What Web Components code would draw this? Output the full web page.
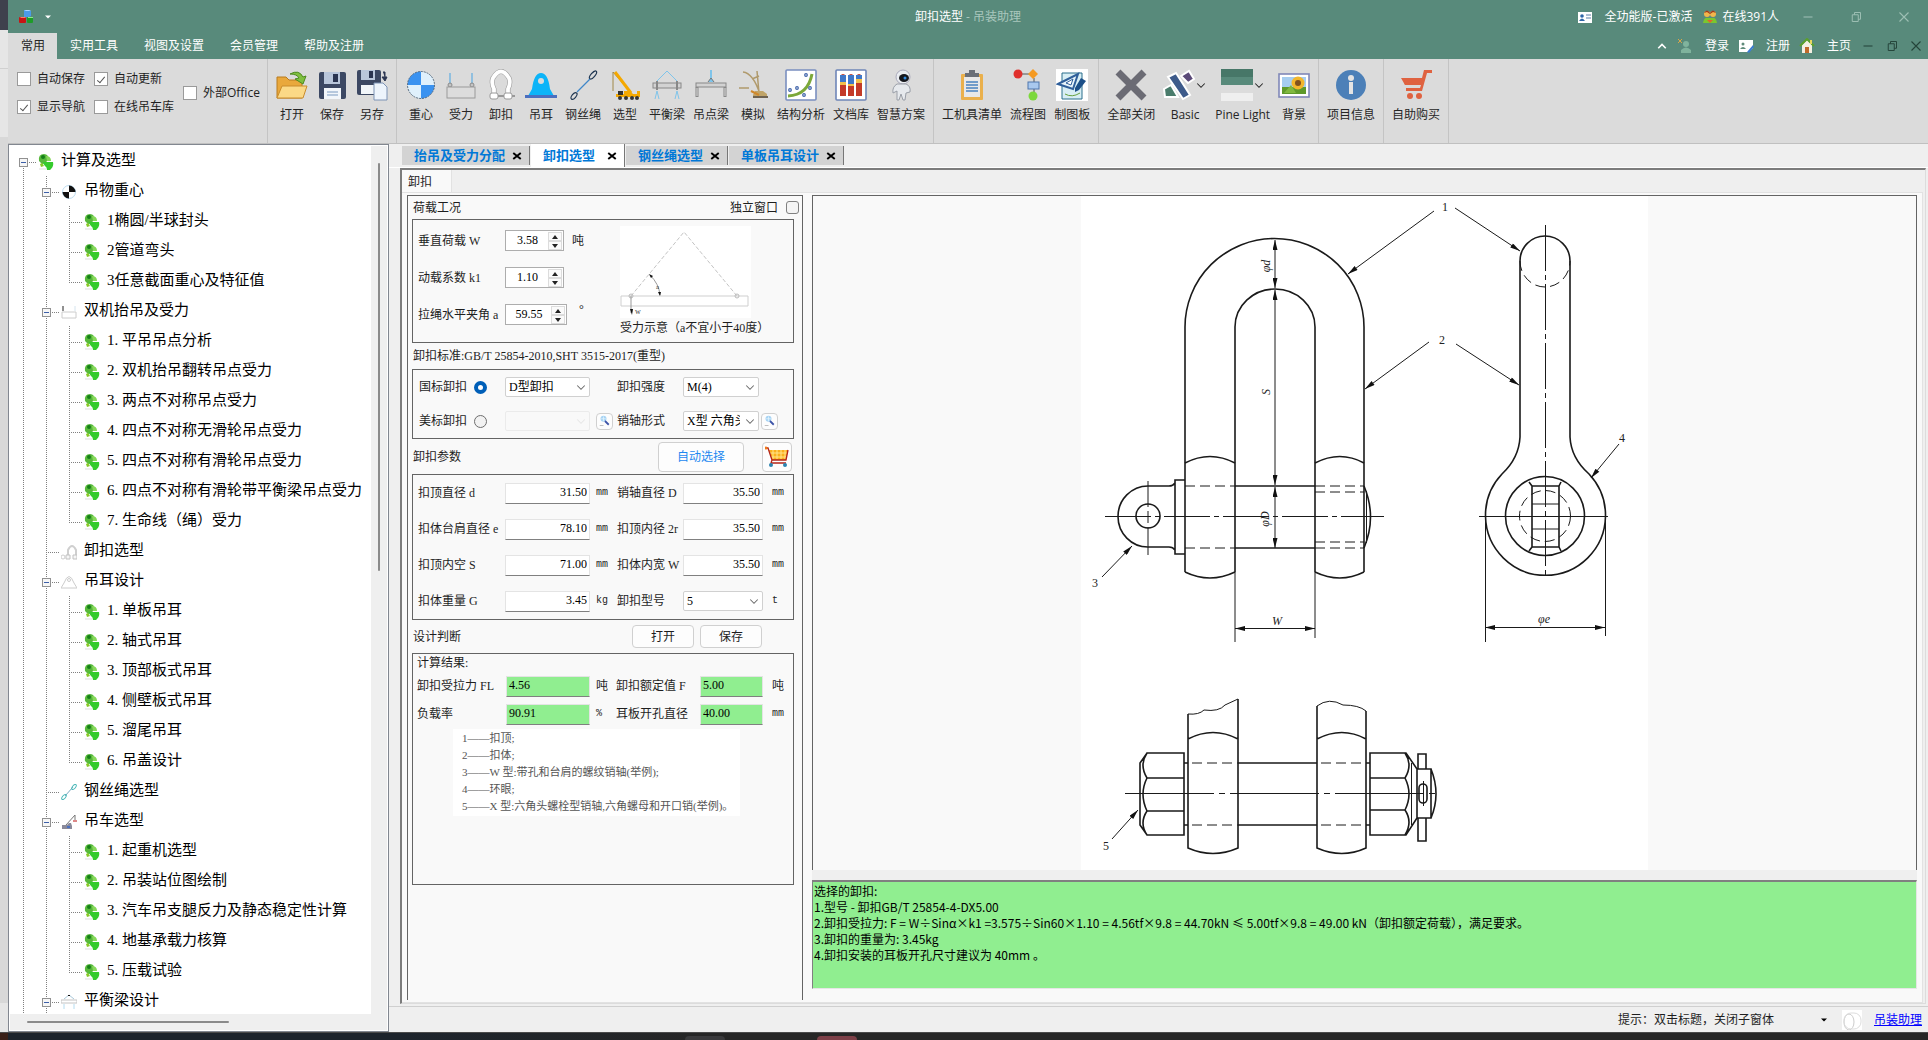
<!DOCTYPE html>
<html lang="zh-CN">
<head>
<meta charset="utf-8">
<title>卸扣选型 - 吊装助理</title>
<style>
  :root {
    --green: #588a7b;
    --ribbon: #dbdbdb;
    --chrome: #efefef;
    --page: #f9f9f9;
    --line: #646464;
    --ok: #90ee90;
    --ui-font: "Open Sans", "Noto Sans CJK SC", sans-serif;
    --form-font: "Liberation Serif", "Noto Sans CJK SC", serif;
    --log-font: "Noto Sans CJK SC", sans-serif;
  }
  body {
    margin: 0;
    font: 12px/16px var(--ui-font);
    color: #1e1e1e;
  }
</style>
</head>
<body>
<app-window></app-window>

<script>
const ICONS = {
  cubes: `<path d="M6 1h5l2 1v5l-2 1H6z" fill="#4a9be8"/><path d="M6 1h5l2 1H8z" fill="#a8d4ff"/><rect x="1" y="8" width="7" height="6" rx="1" fill="#c81414"/><path d="M2 8h5l1 1H3z" fill="#ff7a6a"/><rect x="9" y="8" width="6" height="6" rx="1" fill="#1d9c28"/><path d="M10 8h5v1h-5z" fill="#8be88a"/>`,
  drop: `<path d="M4 6h8l-4 4z" fill="currentColor"/>`,
  chevron: `<path d="M3 6l5 5 5-5" fill="none" stroke="currentColor" stroke-width="1.4"/>`,
  caretup: `<path d="M3 11l5-5 5 5" fill="none" stroke="currentColor" stroke-width="2.2"/>`,
  min: `<path d="M2 8h12" stroke="currentColor" stroke-width="1.4"/>`,
  restore: `<path d="M3 5h8v9H3zM6 5V2h8v9h-3" fill="none" stroke="currentColor" stroke-width="1.3"/>`,
  close: `<path d="M2 2l12 12M14 2L2 14" stroke="currentColor" stroke-width="1.5"/>`,
  cross: `<path d="M3 4l10 8M13 4L3 12" stroke="currentColor" stroke-width="2.6"/>`,
  card: `<rect x="1" y="3" width="14" height="11" fill="#fff"/><circle cx="5" cy="7" r="1.800" fill="#2f66a8"/><path d="M2 12q3-5 6 0z" fill="#2f66a8"/><path d="M9 6h5M9 9h5" stroke="#5a7fa8"/>`,
  people: `<circle cx="5" cy="5" r="3" fill="#f2b64c"/><circle cx="11" cy="5" r="3" fill="#f2b64c"/><path d="M2 4q3-5 6 0q3-5 6 0l-3-1-3 2-3-2z" fill="#a03a1e"/><path d="M1 14q1-6 5-5h4q4-1 5 5z" fill="#7cc62e"/><path d="M5 11l3 3 3-3z" fill="#e2642c"/>`,
  user: `<circle cx="9" cy="6" r="3" fill="#7fb39d"/><path d="M4 15v-3q5-5 10 0v3z" fill="#7fb39d"/><path d="M1 1l4 4M5 1L1 5" stroke="#d7a64a"/>`,
  register: `<path d="M1 2h14v8l-4 4H1z" fill="#fff"/><circle cx="5" cy="6" r="1.500" fill="#5f8b7b"/><path d="M2 11q3-4 6 0z" fill="#5f8b7b"/><path d="M9 14l6-7 1 2-5 6z" fill="#3a7bd0"/>`,
  home: `<path d="M3 7l5-5 5 5v8H3z" fill="#f4efe2"/><path d="M1 8l7-7 7 7" fill="none" stroke="#5aa02c" stroke-width="2"/><rect x="6" y="9" width="4" height="6" fill="#c06a2a"/><rect x="11" y="2" width="2" height="4" fill="#e8d860"/>`,
  open: `<path d="M1 8h9l3 3h13v18H1z" fill="#e9a83c" stroke="#b87a1e"/><path d="M1 29l5-12h25l-4 12z" fill="#fbd986" stroke="#c98c2c"/><path d="M14 5q9-5 13 3l3-1-3 8-8-5 4-1q-2-4-9-4z" fill="#7fbf3f" stroke="#4d8a1e"/>`,
  save: `<rect x="3" y="3" width="27" height="27" rx="2" fill="#3c4863"/><rect x="8" y="3" width="16" height="12" fill="#b9c6da"/><rect x="17" y="5" width="5" height="8" fill="#2a3450"/><rect x="8" y="19" width="17" height="11" fill="#f2f6fa"/><path d="M11 23h11M11 26h11" stroke="#7a9ac0"/>`,
  saveas: `<rect x="1" y="1" width="24" height="25" rx="2" fill="#3c4863"/><rect x="5" y="1" width="14" height="10" fill="#b9c6da"/><rect x="13" y="2" width="4" height="7" fill="#2a3450"/><rect x="5" y="16" width="13" height="9" fill="#f2f6fa"/><path d="M18 14h9l4 4v13H18z" fill="#edf4fc" stroke="#7d93b5"/><path d="M27 3h2v6M26 8l3 4 2-4z" fill="#2a3450" stroke="#2a3450"/>`,
  gravity: `<circle cx="16" cy="16" r="13.500" fill="#dff0fc"/><path d="M16 16V2.500A13.500 13.500 0 0 0 2.500 16zM16 16v13.500A13.500 13.500 0 0 0 29.500 16z" fill="#3a92f0"/><circle cx="16" cy="16" r="13.500" fill="none" stroke="#5a6d80" stroke-dasharray="2 1"/>`,
  force: `<path d="M5 4v12M27 4v12" stroke="#7fb9e0" stroke-width="1.600"/><circle cx="5" cy="16" r="2" fill="#c4c4c4" stroke="#8a8a8a"/><circle cx="27" cy="16" r="2" fill="#c4c4c4" stroke="#8a8a8a"/><rect x="2" y="18" width="28" height="11" fill="#dcdcdc" stroke="#9a9a9a"/>`,
  shackle: `<path d="M9 25V20Q6 14 8 9q8-13 16 0q2 5-1 11v5" fill="none" stroke="#9c9c9c" stroke-width="5"/><path d="M9 25V20Q6 14 8 9q8-13 16 0q2 5-1 11v5" fill="none" stroke="#fff" stroke-width="3.800"/><rect x="5" y="24" width="8" height="6" rx="2" fill="#fff" stroke="#999"/><rect x="19" y="24" width="8" height="6" rx="2" fill="#fff" stroke="#999"/><path d="M13 27h6M27 27h3" stroke="#999" stroke-width="2"/>`,
  lug: `<path d="M3 27l4-7q2-16 9-16t9 16l4 7z" fill="#0cb4f8"/><rect x="0" y="26" width="32" height="3" fill="#4a6fc0"/><circle cx="16" cy="12" r="3" fill="#dbdbdb"/>`,
  rope: `<g fill="none" stroke="#1e3550" stroke-width="1.200"><ellipse cx="26" cy="6" rx="2" ry="5" transform="rotate(40 26 6)"/><ellipse cx="7" cy="27" rx="2" ry="4" transform="rotate(40 7 27)"/></g><path d="M23 10L10 23" stroke="#3f86c8" stroke-width="1.300"/>`,
  crane: `<path d="M4 3v19M4 3l19 22" stroke="#a08848" stroke-width="1"/><path d="M6 3l16 21" stroke="#f4a800" stroke-width="3"/><path d="M7 25h8v-3h6l3 3h4v-3h3v6H7z" fill="#f4a800"/><path d="M9 22h5v4H9z" fill="#333"/><g fill="#333"><circle cx="11" cy="29" r="2"/><circle cx="17" cy="29" r="2"/><circle cx="23" cy="29" r="2"/><circle cx="28" cy="29" r="2"/></g>`,
  beam: `<path d="M5 13L16 2l11 11" fill="none" stroke="#7fc4ea"/><rect x="2" y="14" width="28" height="5" fill="#d2d2d2" stroke="#888"/><path d="M6 12v9M26 12v9" stroke="#888" stroke-width="2"/><path d="M4 30l2-8 2 8M24 30l2-8 2 8" fill="none" stroke="#7fc4ea"/>`,
  pointbeam: `<path d="M16 1v10" stroke="#7fc4ea" stroke-width="2"/><path d="M13 13l3-4 3 4" fill="#7fc4ea" stroke="#777"/><rect x="1" y="14" width="30" height="4" fill="#d2d2d2" stroke="#888"/><path d="M2 18v10M30 18v10" stroke="#888" stroke-width="3"/><path d="M2 19v8M30 19v8" stroke="#ddd"/>`,
  simulate: `<path d="M6 3q10 1 17 22M22 7l-7 3M20 2l2 22M2 19h10" fill="none" stroke="#b09a6c" stroke-width="1.500"/><path d="M18 22h8l4 3v4H16v-3z" fill="#c0a468"/><path d="M16 28h15" stroke="#6e6250" stroke-width="2"/><path d="M14 22l8 4" stroke="#d0882c" stroke-width="2"/>`,
  curve: `<rect x="1" y="1" width="30" height="30" rx="1" fill="#fff" stroke="#7a8fc0" stroke-width="1.600"/><path d="M3 27q20-1 24-22" fill="none" stroke="#7ca83a" stroke-width="3"/><g fill="#fff" stroke="#3c60a8" stroke-width="1.200"><circle cx="21" cy="6" r="1.300"/><circle cx="12" cy="19" r="1.300"/><circle cx="5" cy="21" r="1.300"/><circle cx="25" cy="19" r="1.300"/><circle cx="19" cy="26" r="1.300"/></g>`,
  library: `<rect x="1" y="1" width="30" height="30" rx="1" fill="#fff" stroke="#6f86b8" stroke-width="1.600"/><path d="M5 7q3-4 6 0v20H5zM13 7q3-4 6 0v20h-6zM21 7q3-4 6 0v20h-6z" fill="#c33a28"/><path d="M5 6h6v7H5zM13 6h6v9h-6zM21 6h6v4h-6z" fill="#3f78c8"/><path d="M5 13h6v3H5zM13 15h6v2h-6zM21 10h6v4h-6z" fill="#f2c04a"/>`,
  robot: `<ellipse cx="18" cy="8" rx="7" ry="7" fill="#e9ecf0" stroke="#aab"/><ellipse cx="19" cy="9" rx="5" ry="4" fill="#14161c"/><circle cx="20" cy="9" r="1.500" fill="#2f8ae0"/><path d="M12 15h9q5 2 4 8l-4 1-1 7h-2l-2-6-2 6h-2v-9l-4 2q-1-6 4-9z" fill="#e6e9ed" stroke="#9a9fa8"/>`,
  clipboard: `<rect x="5" y="5" width="22" height="26" rx="1" fill="#eab04c"/><rect x="8" y="8" width="16" height="20" fill="#e8e8e8"/><path d="M9 4h4V1h6v3h4v4H9z" fill="#6a6f78"/><path d="M10 13h12M10 16h12M10 19h12M10 22h12" stroke="#4a82c0" stroke-width="1.500"/>`,
  flow: `<path d="M8 5h10M22 9v16" stroke="#555"/><circle cx="6" cy="5" r="4.500" fill="#e0302c"/><path d="M21 0l5 5-5 5-5-5z" fill="#f59a22"/><rect x="16" y="13" width="11" height="7" fill="#a9c8ee" stroke="#4f76ad"/><circle cx="21" cy="27" r="4.500" fill="#7cd83c"/>`,
  draft: `<rect width="32" height="32" fill="#fff"/><path d="M6 4h20v26H6z" fill="#d8eef4" stroke="#2b6f8c"/><path d="M2 15L22 5l-5 15z" fill="#e7f4fa" stroke="#2f5f9a" stroke-width="2"/><path d="M10 14l7-4-2 6z" fill="#fff" stroke="#2f5f9a"/><path d="M25 9l5 3-7 9-4 2v-4z" fill="#1c4f88"/><path d="M9 25q7 4 15-1" stroke="#66a03c" fill="none"/>`,
  closeall: `<path d="M3 3l26 26M29 3L3 29" stroke="#6b6b74" stroke-width="7"/>`,
  basic: `<g stroke="#fff" stroke-width="2"><path d="M5 8l8-4 14 22-7 4z" fill="#3d5a8a"/><path d="M18 7l8-5 5 8-6 4z" fill="#5b4a78"/><path d="M1 20l7-4 7 12H2z" fill="#4a7c6c"/></g>`,
  pine: `<path d="M0 0h32v8H0z" fill="#477768"/><path d="M0 8h32v8H0z" fill="#588a7b"/><path d="M0 16h32v8H0z" fill="#dcdcdc"/><path d="M0 24h32v8H0z" fill="#efefef"/>`,
  scene: `<rect x="1" y="5" width="30" height="23" fill="#fff" stroke="#8088b8" stroke-width="1.600"/><rect x="4" y="8" width="24" height="17" fill="#a6cdf0"/><path d="M4 18h24v7H4z" fill="#5f9a2c"/><path d="M6 24l7-8 5 8z" fill="#80b840"/><circle cx="20" cy="14" r="6.500" fill="#f2b62c"/><circle cx="20" cy="14" r="3" fill="#80501c"/>`,
  info: `<ellipse cx="16" cy="16" rx="15" ry="15" fill="#4c80b8"/><circle cx="16" cy="9" r="3" fill="#e4e4e4"/><rect x="14" y="13" width="4" height="12" fill="#e4e4e4"/>`,
  buy: `<path d="M24 1h8v3h-5l-5 18H6V19h14l1-3H5L1 9h21z" fill="#df6240"/><path d="M4 12h17l-1 4H5z" fill="#df6240"/><circle cx="10" cy="27" r="3" fill="#df6240"/><circle cx="19" cy="27" r="3" fill="#df6240"/>`,
  leaf: `<path d="M1 7q-1-7 5-7 5 0 4 6-5 6-7 3z" fill="#58b83c"/><circle cx="5" cy="3" r="2" fill="#168018"/><path d="M8 2q5 0 5 5H9z" fill="#86d85a"/><path d="M5 8h10q1 4-2 7l-1 1H9q0-3-2-4-2-2-2-4z" fill="#35cb2c"/><path d="M2 10l2-1 2 3-3 1z" fill="#88c828"/><path d="M1 15h7" stroke="#ddd"/>`,
  balance: `<circle cx="8" cy="8" r="6.500" fill="#fff" stroke="#bcdcf0"/><path d="M8 8V1.500A6.500 6.500 0 0 1 14.500 8zM8 8v6.500A6.500 6.500 0 0 1 1.500 8z" fill="#111"/>`,
  lift: `<path d="M1 14V8h14v6z" fill="#fff" stroke="#ccc"/><path d="M2 2v5" stroke="#222"/><path d="M14 2v5" stroke="#d5e4ee"/>`,
  shacklesm: `<path d="M7 12V6q4-8 8 0v6" fill="none" stroke="#cfcfcf" stroke-width="2"/><path d="M5 11h4v4H5zM12 11h4v4h-4z" fill="#f6f6f6" stroke="#c2c2c2"/><circle cx="2" cy="13" r="2" fill="#fff" stroke="#ccc"/>`,
  lugsm: `<path d="M0 14l3-5q5-13 10 0l3 5z" fill="#fff" stroke="#ccc"/><circle cx="8" cy="6" r="1.500" fill="none" stroke="#ccc"/>`,
  ropesm: `<path d="M4 12l8-9" stroke="#7aa8c0"/><ellipse cx="13" cy="3" rx="1.500" ry="3" transform="rotate(40 13 3)" fill="none" stroke="#49b8b8"/><ellipse cx="3" cy="13" rx="1.500" ry="3" transform="rotate(40 3 13)" fill="none" stroke="#49b8b8"/>`,
  cranesm: `<path d="M5 11l9-10v5" stroke="#777" fill="none"/><path d="M12 6h4v2h-4z" fill="#d88"/><path d="M1 11h5l2-2h2l1 3v3H1z" fill="#8a8a9a"/><path d="M6 12h3v2H6z" fill="#4a70c0"/>`,
  beamsm: `<path d="M3 5l5-4 5 4" stroke="#a8c8da" fill="none"/><path d="M7 1h2v1H7z" fill="#111"/><rect x="0" y="6" width="16" height="3" fill="#fff" stroke="#c4c4c4"/><path d="M3 10v5M13 10v5" stroke="#b4dcf0"/>`,
  find: `<circle cx="6" cy="5" r="4" fill="#a8d4f4"/><path d="M3 5h6M6 2v6" stroke="#e4f4fc"/><path d="M8 8l5 5" stroke="#3d54a8" stroke-width="2.400"/><path d="M1 14h5" stroke="#aaa"/>`,
  trolley: `<path d="M4 4h19l-2 10H7z" fill="#fbb01c"/><path d="M8 4v9M12 4v9M16 4v9M20 4v9M5 7h17M6 11h15" stroke="#ffe58a"/><path d="M1 2h2l4 12h14l2-10M7 14l-1 3h15" stroke="#b42418" stroke-width="1.300" fill="none"/><circle cx="1" cy="2" r="1.500" fill="#f07818"/><circle cx="6" cy="19" r="2" fill="#2c84b0"/><circle cx="20" cy="19" r="2" fill="#2c84b0"/>`,
  moon: `<rect width="20" height="20" fill="#fff"/><ellipse cx="7" cy="12" rx="5" ry="8" fill="none" stroke="#ccc"/><rect x="2" y="3" width="17" height="16" rx="7" fill="none" stroke="#ddd"/>`
};

const BOXES = { trolley: "0 0 24 22", moon: "0 0 20 20" };
const BIG = "open save saveas gravity force shackle lug rope crane beam pointbeam simulate curve library robot clipboard flow draft closeall basic pine scene info buy".split(" ");

class BaseElement extends HTMLElement {
  constructor() {
    super();
    this.attachShadow({ mode: "open" });
  }

  connectedCallback() {
    this.shadowRoot.innerHTML = `
      <style>
        * { box-sizing: border-box; }
        button, input, select, textarea { font: inherit; color: inherit; margin: 0; }
        ${this.getStyles()}
      </style>
      ${this.getTemplate()}
    `;
    this.setup();
  }

  attr(name, fallback = "") {
    return this.getAttribute(name) ?? fallback;
  }

  getStyles() { return ""; }
  getTemplate() { return "<slot></slot>"; }
  setup() {}
}

class UiIcon extends BaseElement {
  getStyles() {
    return `
      :host { display: inline-flex; flex: none; width: 16px; height: 16px; }
      :host([size="32"]) { width: 32px; height: 32px; }
      :host([size="24"]) { width: 24px; height: 22px; }
      :host([size="20"]) { width: 20px; height: 20px; }
      :host([size="12"]) { width: 12px; height: 12px; }
      svg { width: 100%; height: 100%; }
    `;
  }

  getTemplate() {
    const name = this.attr("name");
    const box = BOXES[name] || (BIG.includes(name) ? "0 0 32 32" : "0 0 16 16");
    return `<svg viewBox="${box}" aria-hidden="true">${ICONS[name]}</svg>`;
  }
}

class TitleBar extends BaseElement {
  getStyles() {
    return `
      :host { display: block; background: var(--green); color: #fff; }
      .caption { display: grid; grid-template-columns: 1fr auto 1fr; align-items: center; height: 33px; }
      .left { display: flex; align-items: center; gap: 8px; padding-left: 10px; }
      .title span { color: #a9c7bd; }
      .right, .session, .links { display: flex; align-items: center; justify-content: flex-end; }
      .right { color: #fff; }
      .mode { margin: 0 10px 0 12px; }
      .online { margin: 0 5px 0 4px; }
      button { display: flex; align-items: center; justify-content: center; border: 0; padding: 0; background: none; color: inherit; }
      .win { width: 48px; height: 32px; color: #9dbfb4; }
      .row { display: flex; justify-content: space-between; height: 26px; }
      nav { display: flex; }
      nav button { padding: 0 13px; color: #fff; }
      nav button:first-child { padding: 0 12px 0 13px; }
      nav button[aria-selected="true"] { background: var(--ribbon); color: #262626; }
      .links a { display: flex; align-items: center; gap: 12px; margin-left: 9px; color: #fff; text-decoration: none; }
      .child { width: 24px; height: 27px; color: #24443a; }
      .links a:last-of-type { margin-right: 5px; }
    `;
  }

  getTemplate() {
    return `
      <div class="caption">
        <div class="left">
          <ui-icon name="cubes"></ui-icon>
          <button aria-label="自定义快速访问"><ui-icon name="drop" size="12"></ui-icon></button>
        </div>
        <div class="title">卸扣选型 <span>- 吊装助理</span></div>
        <div class="right">
          <ui-icon name="card"></ui-icon><span class="mode">全功能版-已激活</span>
          <ui-icon name="people"></ui-icon><span class="online">在线391人</span>
          <button class="win" aria-label="最小化"><ui-icon name="min" size="12"></ui-icon></button>
          <button class="win" aria-label="还原"><ui-icon name="restore" size="12"></ui-icon></button>
          <button class="win" aria-label="关闭"><ui-icon name="close" size="12"></ui-icon></button>
        </div>
      </div>
      <div class="row">
        <nav role="tablist">
          <button role="tab" aria-selected="true">常用</button>
          <button role="tab">实用工具</button>
          <button role="tab">视图及设置</button>
          <button role="tab">会员管理</button>
          <button role="tab">帮助及注册</button>
        </nav>
        <div class="links">
          <button aria-label="折叠功能区"><ui-icon name="caretup" size="12"></ui-icon></button>
          <a href="#login"><ui-icon name="user"></ui-icon>登录</a>
          <a href="#register"><ui-icon name="register"></ui-icon>注册</a>
          <a href="#home"><ui-icon name="home"></ui-icon>主页</a>
          <button class="child" aria-label="最小化子窗体"><ui-icon name="min" size="12"></ui-icon></button>
          <button class="child" aria-label="还原子窗体"><ui-icon name="restore" size="12"></ui-icon></button>
          <button class="child" aria-label="关闭子窗体"><ui-icon name="close" size="12"></ui-icon></button>
        </div>
      </div>
    `;
  }
}

class CheckOption extends BaseElement {
  getStyles() {
    return `
      :host { display: block; }
      label { display: flex; align-items: center; gap: 6px; white-space: nowrap; }
      input { appearance: none; display: grid; place-items: center; width: 14px; height: 14px; border: 1px solid #9a9a9a; background: #fff; }
      input:checked::before { content: ""; width: 3px; height: 7px; border: solid #555; border-width: 0 1px 1px 0; transform: rotate(40deg); }
    `;
  }

  getTemplate() {
    return `<label><input type="checkbox" ${this.hasAttribute("checked") ? "checked" : ""}>${this.attr("label")}</label>`;
  }
}

class RibbonGroup extends BaseElement {
  getStyles() {
    return `
      :host { display: flex; padding: 8px 4px 0; border-right: 1px solid #c4c4c4; }
      :host([compact]) { padding-top: 6px; }
    `;
  }
}

class RibbonButton extends BaseElement {
  getStyles() {
    return `
      :host { display: block; }
      button { display: grid; justify-items: center; grid-template-rows: 38px 20px; min-width: 40px; padding: 2px 4px 0; border: 0; background: none; color: #262626; white-space: nowrap; }
      button:hover { background: #e8e8e8; }
      .pic { display: flex; align-items: center; height: 32px; }
    `;
  }

  getTemplate() {
    const drop = this.hasAttribute("drop") ? `<ui-icon name="chevron" size="12"></ui-icon>` : "";
    return `<button><span class="pic"><ui-icon name="${this.attr("icon")}" size="32"></ui-icon>${drop}</span><span>${this.attr("label")}</span></button>`;
  }
}

class RibbonBar extends BaseElement {
  getStyles() {
    return `
      :host { display: flex; height: 85px; background: var(--ribbon); border-bottom: 1px solid #c0c0c0; }
      .options { display: grid; grid-template-columns: 77px 89px auto; grid-template-rows: 28px 28px; align-items: center; width: 246px; margin-left: 5px; }
      .options check-option:nth-child(3) { grid-row: 1 / 3; grid-column: 3; }
    `;
  }

  getTemplate() {
    const button = ([label, icon, drop]) => `<ribbon-button label="${label}" icon="${icon}" ${drop ? "drop" : ""}></ribbon-button>`;
    const group = (items) => `<ribbon-group>${items.map(button).join("")}</ribbon-group>`;
    return `
      <ribbon-group compact>
        <div class="options">
          <check-option label="自动保存"></check-option>
          <check-option label="自动更新" checked></check-option>
          <check-option label="外部Office"></check-option>
          <check-option label="显示导航" checked></check-option>
          <check-option label="在线吊车库"></check-option>
        </div>
      </ribbon-group>
      ${group([["打开", "open"], ["保存", "save"], ["另存", "saveas"]])}
      ${group([
        ["重心", "gravity"], ["受力", "force"], ["卸扣", "shackle"], ["吊耳", "lug"], ["钢丝绳", "rope"],
        ["选型", "crane"], ["平衡梁", "beam"], ["吊点梁", "pointbeam"], ["模拟", "simulate"],
        ["结构分析", "curve"], ["文档库", "library"], ["智慧方案", "robot"]
      ])}
      ${group([["工机具清单", "clipboard"], ["流程图", "flow"], ["制图板", "draft"]])}
      ${group([["全部关闭", "closeall"], ["Basic", "basic", true], ["Pine Light", "pine", true], ["背景", "scene"]])}
      ${group([["项目信息", "info"]])}
      ${group([["自助购买", "buy"]])}
    `;
  }
}

// One node of the navigation tree; child nodes come in through the slot.
class TreeItem extends BaseElement {
  getStyles() {
    return `
      :host { display: block; --dots: repeating-linear-gradient(#808080 0 1px, transparent 1px 2px); }
      .row {
        display: flex; align-items: center; height: 30px; padding-bottom: 2px; white-space: nowrap;
        background: var(--dots) 11px 0 / 1px 30px no-repeat,
          repeating-linear-gradient(90deg, #808080 0 1px, transparent 1px 2px) 11px 16px / 14px 1px no-repeat;
      }
      :host([last]) .row { background-size: 1px 16px, 14px 1px; }
      :host([root]) .row { background-position: 11px 18px, 11px 16px; }
      .kids { padding-left: 23px; background: var(--dots) 11px 0 / 1px 100% no-repeat; }
      :host([last]) .kids { background: none; }
      .toggle { display: flex; align-items: center; justify-content: center; width: 23px; height: 24px; padding: 5px 0 0; border: 0; background: none; }
      .toggle span { width: 9px; height: 9px; border: 1px solid #919191; background: linear-gradient(#3c5fa8, #3c5fa8) center / 5px 1px no-repeat #f6f6f6; }
      .gap { width: 23px; }
      ui-icon { margin: 3px 7px 0 3px; }
    `;
  }

  getTemplate() {
    const toggle = this.children.length || this.hasAttribute("open")
      ? `<button class="toggle" aria-label="展开或折叠"><span></span></button>`
      : `<span class="gap"></span>`;
    return `
      <div class="row">${toggle}<ui-icon name="${this.attr("icon", "leaf")}"></ui-icon><span>${this.attr("label")}</span></div>
      <div class="kids"><slot></slot></div>
    `;
  }

  setup() {
    const toggle = this.shadowRoot.querySelector(".toggle");
    const kids = this.shadowRoot.querySelector(".kids");
    toggle?.addEventListener("click", () => { kids.hidden = !kids.hidden; });
  }
}

const TREE = [
  ["吊物重心", "balance", ["1椭圆/半球封头", "2管道弯头", "3任意截面重心及特征值"]],
  ["双机抬吊及受力", "lift", ["1. 平吊吊点分析", "2. 双机抬吊翻转吊点受力", "3. 两点不对称吊点受力", "4. 四点不对称无滑轮吊点受力", "5. 四点不对称有滑轮吊点受力", "6. 四点不对称有滑轮带平衡梁吊点受力", "7. 生命线（绳）受力"]],
  ["卸扣选型", "shacklesm", []],
  ["吊耳设计", "lugsm", ["1. 单板吊耳", "2. 轴式吊耳", "3. 顶部板式吊耳", "4. 侧壁板式吊耳", "5. 溜尾吊耳", "6. 吊盖设计"]],
  ["钢丝绳选型", "ropesm", []],
  ["吊车选型", "cranesm", ["1. 起重机选型", "2. 吊装站位图绘制", "3. 汽车吊支腿反力及静态稳定性计算", "4. 地基承载力核算", "5. 压载试验"]],
  ["平衡梁设计", "beamsm", [], "open"]
];

class NavTree extends BaseElement {
  getStyles() {
    return `
      :host { display: grid; grid-template: minmax(0, 1fr) 16px / minmax(0, 1fr) 16px; width: 381px; min-height: 0; border: 1px solid #828790; background: var(--chrome); box-shadow: inset 0 0 0 1px #fff; padding: 1px; }
      .tree { overflow: hidden; padding-left: 2px; background: #fff; font: 15px/22px var(--form-font); color: #000; }
      .bar i { display: block; background: #8a8a8a; border-radius: 1px; }
      .v i { width: 2px; height: 47%; margin: 17px 0 0 7px; }
      .h i { height: 2px; width: 56%; margin: 7px 0 0 17px; }
    `;
  }

  getTemplate() {
    const leaves = (names) => names.map((name, i) => `<tree-item label="${name}" ${i === names.length - 1 ? "last" : ""}></tree-item>`).join("");
    return `
      <div class="tree">
        <tree-item root label="计算及选型">
          ${TREE.map(([label, icon, names, open = ""]) => `<tree-item label="${label}" icon="${icon}" ${open}>${leaves(names)}</tree-item>`).join("")}
        </tree-item>
      </div>
      <div class="bar v"><i></i></div>
      <div class="bar h"><i></i></div>
    `;
  }
}

class MdiTab extends BaseElement {
  getStyles() {
    return `
      :host { display: flex; align-items: center; gap: 4px; height: 19px; margin-right: 1px; padding: 0 4px 0 12px; background: #d3d3d3; border-right: 1px solid #777; font: bold 13px/18px var(--form-font); color: #0078d7; }
      :host([active]) { height: 23px; gap: 9px; background: #fff; }
      button { display: flex; border: 0; padding: 2px; background: none; color: #000; }
    `;
  }

  getTemplate() {
    return `<slot></slot><button aria-label="关闭"><ui-icon name="cross" size="12"></ui-icon></button>`;
  }
}

class GroupBox extends BaseElement {
  getStyles() {
    return `:host { display: block; border: 1px solid var(--line); }`;
  }
}

class PickList extends BaseElement {
  getStyles() {
    return `
      :host { display: grid; grid-template: 20px / minmax(0, 1fr); align-items: center; color: #000; }
      select, ui-icon { grid-area: 1 / 1; }
      select { appearance: none; width: 100%; height: 20px; padding: 0 18px 0 3px; border: 1px solid #d0d0d0; border-radius: 2px; background: #fff; }
      select:disabled { background: var(--page); border-color: #e6e6e6; }
      ui-icon { justify-self: end; margin-right: 3px; color: #6a6a6a; pointer-events: none; }
      select:disabled + ui-icon { color: #bdbdbd; }
    `;
  }

  getTemplate() {
    return `
      <select aria-label="${this.attr("label")}" ${this.hasAttribute("disabled") ? "disabled" : ""}><option>${this.attr("value")}</option></select>
      <ui-icon name="chevron" size="12"></ui-icon>
    `;
  }
}

// Label, control and unit in one line. kind: text | result | spin | select
class LabeledField extends BaseElement {
  getStyles() {
    return `
      :host { display: grid; grid-template-columns: var(--label-w) var(--field-w) auto; justify-content: start; align-items: center; white-space: nowrap; }
      .text { width: 100%; height: 21px; padding: 0 2px 2px; border: 1px solid #e4e4e4; border-bottom-color: #808080; background: #fff; color: #000; text-align: right; }
      .result { background: var(--ok); text-align: left; }
      .spin { display: flex; height: 21px; padding: 1px; border: 1px solid #adadad; background: #fff; color: #000; }
      .spin input { flex: 1; min-width: 0; padding: 0 0 2px; border: 0; text-align: center; }
      .arrows { display: grid; width: 14px; }
      .arrows button { display: grid; place-items: center; padding: 0; border: 1px solid #dcdcdc; background: #fafafa; min-height: 0; height: 9px; }
      .arrows i { width: 0; height: 0; border: 3px solid transparent; border-top-width: 0; border-bottom: 4px solid #222; }
      .arrows button + button i { transform: rotate(180deg); }
      .unit { display: flex; align-items: center; gap: 2px; padding-left: var(--unit-gap, 6px); }
      .latin { font: 10px/16px "Liberation Mono", monospace; }
      :host([raised]) .unit { align-self: start; padding-top: 5px; }
    `;
  }

  getTemplate() {
    const label = this.attr("label");
    const value = this.attr("value");
    const kind = this.attr("kind", "text");
    const unit = this.attr("unit");
    const control = {
      select: `<pick-list label="${label}" value="${value}"></pick-list>`,
      spin: `<span class="spin"><input id="f" value="${value}"><span class="arrows"><button aria-label="增加" data-step="1"><i></i></button><button aria-label="减少" data-step="-1"><i></i></button></span></span>`
    }[kind] || `<input id="f" class="text ${kind}" value="${value}">`;
    const caption = kind === "select" ? `<span>${label}</span>` : `<label for="f">${label}</label>`;
    return `${caption}${control}<span class="unit ${/^[a-z%]+$/.test(unit) ? "latin" : ""}">${unit}<slot></slot></span>`;
  }

  setup() {
    const input = this.shadowRoot.getElementById("f");
    this.shadowRoot.querySelectorAll("[data-step]").forEach((button) => {
      button.addEventListener("click", () => {
        input.value = (Number(input.value) + Number(button.dataset.step) / 10).toFixed(2);
      });
    });
  }
}

class ShackleForm extends BaseElement {
  getStyles() {
    return `
      :host { display: block; width: 396px; padding: 0 8px 0 4px; border: 1px solid var(--line); border-bottom: 0; font: 12px/16px var(--form-font); }
      .head { display: flex; align-items: center; justify-content: space-between; height: 23px; padding-left: 1px; }
      .head.std { height: 26px; }
      .head.act { height: 35px; }
      .head.judge { height: 33px; }
      .solo { display: flex; align-items: center; gap: 8px; margin-right: -5px; }
      .solo input { appearance: none; width: 13px; height: 13px; border: 1px solid #808080; border-radius: 3px; background: #f4f4f4; }
      .buttons { display: flex; gap: 6px; }
      .act .buttons { gap: 18px; margin-right: 2px; }
      .judge .buttons { margin-right: 32px; }
      button { display: inline-flex; align-items: center; justify-content: center; padding: 0; border: 1px solid #d0d0d0; border-radius: 4px; background: #fdfdfd; }
      .auto { width: 86px; height: 30px; color: #1e88f0; }
      .cart { width: 30px; height: 30px; }
      .small { width: 62px; height: 23px; }
      .find { width: 17px; height: 17px; }
      .load { display: grid; grid-template-columns: 202px auto; padding: 2px 0 4px 5px; --label-w: 87px; --field-w: 59px; --unit-gap: 8px; }
      .rows { display: grid; grid-auto-rows: 37px; }
      .wide { --field-w: 62px; --unit-gap: 12px; }
      figure { margin: 4px 0 0; }
      figure svg { display: block; background: #fff; }
      figcaption { line-height: 20px; white-space: nowrap; }
      .pair { display: grid; grid-template-columns: 199px 1fr; align-items: center; height: 36px; padding-left: 5px; --label-w: 87px; --field-w: 85px; }
      .pair > :nth-child(2) { --label-w: 66px; --field-w: 80px; --unit-gap: 9px; }
      .kind .pair { height: 34px; }
      .kind .pair > :nth-child(2) { --field-w: 76px; --unit-gap: 2px; }
      .choice { display: grid; grid-template-columns: 87px 85px auto; align-items: center; }
      .choice label { display: flex; align-items: center; gap: 7px; padding-left: 1px; }
      .choice input { appearance: none; width: 13px; height: 13px; border: 1px solid #6e6e6e; border-radius: 50%; background: #f2f2f2; }
      .choice input:checked { border: 4px solid #005fb8; background: #fff; }
      .choice .find { margin-left: 6px; }
      .result { min-height: 232px; }
      .result p { margin: 0; padding-left: 4px; line-height: 18px; }
      .result .pair { height: 28px; padding-left: 4px; --label-w: 89px; --field-w: 84px; }
      .result .pair > :nth-child(2) { --label-w: 84px; --field-w: 63px; }
      .legend { width: 287px; margin: 1px 0 0 40px; padding: 1px 9px; background: #fff; color: #555; font: 11px/17px "Liberation Serif", "Noto Sans CJK SC", serif; }
      .legend div { white-space: nowrap; }
    `;
  }

  getTemplate() {
    const pair = (a, b) => {
      const field = ([label, value, unit, kind = "text"]) => `<labeled-field label="${label}" value="${value}" unit="${unit}" kind="${kind}"></labeled-field>`;
      return `<div class="pair">${field(a)}${field(b)}</div>`;
    };
    return `
      <div class="head"><span>荷载工况</span><label class="solo">独立窗口<input type="checkbox"></label></div>
      <group-box>
        <div class="load">
          <div class="rows">
            <labeled-field kind="spin" label="垂直荷载 W" value="3.58" unit="吨"></labeled-field>
            <labeled-field kind="spin" label="动载系数 k1" value="1.10"></labeled-field>
            <labeled-field kind="spin" class="wide" raised label="拉绳水平夹角 a" value="59.55" unit="°"></labeled-field>
          </div>
          <figure>
            <svg width="131" height="92" viewBox="0 0 131 92">
              <path d="M11 70L64 6l53 64" fill="none" stroke="#c4c4c4" stroke-dasharray="4 2"/>
              <path d="M1 70h127v10H1z" fill="#fff" stroke="#cfcfcf"/>
              <circle cx="11" cy="70" r="2" fill="none" stroke="#bbb"/><circle cx="117" cy="70" r="2" fill="none" stroke="#bbb"/>
              <path d="M30 49q9 9 10 20M11 70v17" fill="none" stroke="#999"/>
              <path d="M29 48l4 2-2 2zM38 66h3l-1 4zM10 83h3l-1 6z" fill="#111"/>
              <text x="36" y="63" font-size="7" fill="#333">a</text><text x="15" y="88" font-size="8" fill="#444">w</text>
            </svg>
            <figcaption>受力示意（a不宜小于40度）</figcaption>
          </figure>
        </div>
      </group-box>
      <div class="head std">卸扣标准:GB/T 25854-2010,SHT 3515-2017(重型)</div>
      <group-box class="kind">
        <div class="pair">
          <div class="choice">
            <label>国标卸扣<input type="radio" name="std" checked></label>
            <pick-list label="国标卸扣" value="D型卸扣"></pick-list>
          </div>
          <labeled-field kind="select" label="卸扣强度" value="M(4)"></labeled-field>
        </div>
        <div class="pair">
          <div class="choice">
            <label>美标卸扣<input type="radio" name="std"></label>
            <pick-list label="美标卸扣" disabled></pick-list>
            <button class="find" aria-label="查看"><ui-icon name="find" size="12"></ui-icon></button>
          </div>
          <labeled-field kind="select" label="销轴形式" value="X型 六角头螺栓"><button class="find" aria-label="查看"><ui-icon name="find" size="12"></ui-icon></button></labeled-field>
        </div>
      </group-box>
      <div class="head act"><span>卸扣参数</span><span class="buttons"><button class="auto">自动选择</button><button class="cart" aria-label="购买"><ui-icon name="trolley" size="24"></ui-icon></button></span></div>
      <group-box>
        ${pair(["扣顶直径 d", "31.50", "mm"], ["销轴直径 D", "35.50", "mm"])}
        ${pair(["扣体台肩直径 e", "78.10", "mm"], ["扣顶内径 2r", "35.50", "mm"])}
        ${pair(["扣顶内空 S", "71.00", "mm"], ["扣体内宽 W", "35.50", "mm"])}
        ${pair(["扣体重量 G", "3.45", "kg"], ["卸扣型号", "5", "t", "select"])}
      </group-box>
      <div class="head judge"><span>设计判断</span><span class="buttons"><button class="small">打开</button><button class="small">保存</button></span></div>
      <group-box class="result">
        <p>计算结果:</p>
        ${pair(["卸扣受拉力 FL", "4.56", "吨", "result"], ["卸扣额定值 F", "5.00", "吨", "result"])}
        ${pair(["负载率", "90.91", "%", "result"], ["耳板开孔直径", "40.00", "mm", "result"])}
        <div class="legend">
          <div>1——扣顶;</div>
          <div>2——扣体;</div>
          <div>3——W 型:带孔和台肩的螺纹销轴(举例);</div>
          <div>4——环眼;</div>
          <div>5——X 型:六角头螺栓型销轴,六角螺母和开口销(举例)。</div>
        </div>
      </group-box>
    `;
  }
}

class ShackleDrawing extends BaseElement {
  getStyles() {
    return `
      :host { display: flex; justify-content: center; min-height: 0; border: 1px solid var(--line); border-bottom: 0; background: var(--page); }
      svg { height: 100%; aspect-ratio: 567 / 674; background: #fff; }
      g { fill: none; stroke: #1a1a1a; }
      .solid { stroke-width: 1.600; }
      .thin { stroke-width: 1; }
      .hidden { stroke-width: 1; stroke-dasharray: 10 5; }
      .axis { stroke-width: 1; stroke-dasharray: 46 4 5 4; }
      text { font: 12px "Liberation Serif", serif; fill: #222; text-anchor: middle; }
      .dim { font-style: italic; }
    `;
  }

  getTemplate() {
    return `
      <svg viewBox="1082 196 567 674" role="img" aria-label="卸扣示意图">
        <defs>
          <marker id="a" viewBox="0 0 12 6" refX="12" refY="3" markerWidth="12" markerHeight="5" markerUnits="userSpaceOnUse" orient="auto-start-reverse"><path d="M0 0l12 3-12 3z" fill="#111"/></marker>
        </defs>
        <!-- front view -->
        <g class="solid">
          <path d="M1186 572V327a89 88 0 0 1 179 0V572M1236 572V327a40 38 0 0 1 80 0V572"/>
          <path d="M1186 463q25-13 50 0M1316 463q25-13 49 0M1186 572q25 12 50 0M1316 572q25 12 49 0"/>
          <path d="M1236 486h80M1236 548h80"/>
          <path d="M1186 480h-10v74h10M1176 483q-2 3-6 3h-21a30 30.500 0 0 0 0 61h21q4 0 6 3"/>
          <circle cx="1149" cy="516" r="12"/>
          <path d="M1365 486q13 31 0 62"/>
        </g>
        <g class="thin">
          <path d="M1367.500 491v52"/>
          <path d="M1236 572v70M1316 572v66M1149 481v26M1149 511v12M1149 527v28"/>
        </g>
        <g class="hidden">
          <path d="M1186 486h50M1186 548h50M1316 486h49M1316 548h49M1316 492h49M1316 542h49"/>
        </g>
        <g class="axis"><path d="M1106 516.500h279"/></g>
        <g class="thin">
          <path d="M1276 240v48" marker-start="url(#a)" marker-end="url(#a)"/>
          <path d="M1276 290v195" marker-start="url(#a)" marker-end="url(#a)"/>
          <path d="M1276 487v61" marker-start="url(#a)" marker-end="url(#a)"/>
          <path d="M1236 628.500h80" marker-start="url(#a)" marker-end="url(#a)"/>
          <path d="M1486 627.500h120" marker-start="url(#a)" marker-end="url(#a)"/>
        </g>
        <!-- side view -->
        <g class="solid">
          <path d="M1521 437V261a25 25 0 0 1 50 0V437q1 21 19 37a60 60 0 1 1-87 0q17-16 18-37"/>
          <circle cx="1546" cy="516" r="39.500"/>
          <path d="M1533 486v61M1560 486v61M1533 486h27M1533 547h27M1533 486l-3-4M1560 486l2-4M1533 547l-3 4M1560 547l2 4"/>
        </g>
        <g class="thin"><path d="M1533 504h27M1533 529h27M1486.500 516v126M1606.500 516v120M1480 516.500h129"/></g>
        <g class="hidden"><circle cx="1546" cy="516" r="25.500"/><path d="M1521 261a25 26 0 0 0 50 0"/></g>
        <g class="axis"><path d="M1546.500 225v354"/></g>
        <!-- bolt view -->
        <g class="solid">
          <path d="M1185 753h-37l-7 10v62l7 10h37zM1148 778h37M1148 811h37M1148 753q-8 12 0 25q-8 16 0 33q-8 12 0 24"/>
          <path d="M1185 763h4M1185 825h4M1239 763h79M1239 825h79M1367 763h4M1367 825h4"/>
          <path d="M1189 714V848q25 11 50 0V699M1189 739q25-13 50 0M1318 706V848q25 11 49 0V711M1318 739q25-13 49 0"/>
          <path d="M1371 753h36l11 16v49l-11 17h-36zM1371 778h35M1371 810h35M1406 753q8 12 0 25q8 16 0 32q8 12 0 25"/>
          <path d="M1418 769h14v49h-14M1432 769q10 25 0 49M1419 769v-15h8v15M1419 818v23h8v-23"/>
          <rect x="1420" y="784" width="8" height="19" rx="4"/>
        </g>
        <g class="thin">
          <path d="M1189 714q11 1 16-4q15 2 21-5l13-6M1318 706q12-9 26-1q16 0 23 6"/>
          <path d="M1412.500 763v62M1424.500 781v25"/>
        </g>
        <g class="hidden"><path d="M1193 763h46M1193 825h46M1322 763h45M1322 825h45"/></g>
        <g class="axis"><path d="M1126 793.500h315" stroke-dasharray="89 5 6 5"/></g>
        <!-- leaders -->
        <g class="thin">
          <path d="M1435 211L1349 274" marker-end="url(#a)"/><path d="M1456 208L1521 251" marker-end="url(#a)"/>
          <path d="M1430 342L1366 389" marker-end="url(#a)"/><path d="M1457 344L1520 385" marker-end="url(#a)"/>
          <path d="M1620 444L1592 478" marker-end="url(#a)"/><path d="M1103 577L1133 546" marker-end="url(#a)"/>
          <path d="M1113 839L1139 810" marker-end="url(#a)"/>
        </g>
        <text x="1446" y="211">1</text><text x="1443" y="344">2</text><text x="1096" y="587">3</text>
        <text x="1623" y="442">4</text><text x="1107" y="850">5</text>
        <text class="dim" transform="translate(1271 266) rotate(-90)">φd</text>
        <text class="dim" transform="translate(1271 392) rotate(-90)">S</text>
        <text class="dim" transform="translate(1270 519) rotate(-90)">φD</text>
        <text class="dim" x="1278" y="625">W</text><text class="dim" x="1545" y="623">φe</text>
      </svg>
    `;
  }
}

class ResultLog extends BaseElement {
  getStyles() {
    return `
      :host { display: flex; height: 109px; }
      textarea { flex: 1; padding: 1px; border: solid; border-width: 2px 1px 1px 1px; border-color: #808080 #e6e6e6 #e6e6e6 #808080; background: var(--ok); color: #000; font: 12px/16px var(--log-font); resize: none; outline: 0; overflow: hidden; }
    `;
  }

  getTemplate() {
    return `<textarea readonly aria-label="计算说明">选择的卸扣:
1.型号 - 卸扣GB/T 25854-4-DX5.00
2.卸扣受拉力: F = W÷Sinα×k1 =3.575÷Sin60×1.10 = 4.56tf×9.8 = 44.70kN ≤ 5.00tf×9.8 = 49.00 kN（卸扣额定荷载），满足要求。
3.卸扣的重量为: 3.45kg
4.卸扣安装的耳板开孔尺寸建议为 40mm 。</textarea>`;
  }
}

class StatusBar extends BaseElement {
  getStyles() {
    return `
      :host { display: flex; align-items: center; justify-content: flex-end; height: 26px; padding: 1px 6px 0 0; border-top: 1px solid #cfcfcf; background: var(--chrome); }
      button { display: flex; margin: 0 12px 0 44px; padding: 0; border: 0; background: none; color: #000; }
      a { margin-left: 12px; color: #00f; }
    `;
  }

  getTemplate() {
    return `
      <span>提示：双击标题，关闭子窗体</span>
      <button aria-label="更多"><ui-icon name="drop" size="12"></ui-icon></button>
      <ui-icon name="moon" size="20"></ui-icon>
      <a href="#about">吊装助理</a>
    `;
  }
}

class WorkArea extends BaseElement {
  getStyles() {
    return `
      :host { display: flex; flex-direction: column; flex: 1; min-width: 0; background: var(--chrome); }
      .tabs { display: flex; align-items: center; height: 24px; padding-left: 13px; border-bottom: 1px solid #fff; }
      .frame { display: flex; flex-direction: column; flex: 1; min-height: 0; margin: 0 2px 2px 11px; border: solid; border-width: 2px 1px 1px 2px; border-color: #7c7c7c #dcdcdc #dcdcdc #7c7c7c; }
      .sub { width: 50px; height: 22px; padding: 2px 0 0 6px; border: 0; border-right: 1px solid #e2e2e2; background: var(--page); font: 12px/16px var(--form-font); text-align: left; }
      .page { display: flex; gap: 9px; flex: 1; min-height: 0; margin-right: 2px; padding: 2px 5px 2px 5px; border: 1px solid #e2e2e2; border-left: 0; background: var(--page); }
      .view { display: flex; flex-direction: column; flex: 1; min-width: 0; min-height: 0; }
      shackle-drawing { flex: 1; }
      .split { height: 10px; background: var(--chrome); }
      result-log { margin-bottom: 11px; }
    `;
  }

  getTemplate() {
    return `
      <div class="tabs">
        <mdi-tab>抬吊及受力分配</mdi-tab>
        <mdi-tab active>卸扣选型</mdi-tab>
        <mdi-tab>钢丝绳选型</mdi-tab>
        <mdi-tab>单板吊耳设计</mdi-tab>
      </div>
      <div class="frame">
        <button class="sub">卸扣</button>
        <div class="page">
          <shackle-form></shackle-form>
          <div class="view">
            <shackle-drawing></shackle-drawing>
            <div class="split"></div>
            <result-log></result-log>
          </div>
        </div>
      </div>
      <status-bar></status-bar>
    `;
  }
}

class AppWindow extends BaseElement {
  getStyles() {
    return `
      :host { display: grid; grid-template: minmax(0, 1fr) 8px / 8px minmax(0, 1fr); height: 100vh; overflow: hidden; }
      .edge { background: linear-gradient(#3f414d 0 30px, #e6e6e6 30px 68px, #d0d0d0 68px 69px, #e6e6e6 69px 137px, #d8d8d8 137px calc(100% - 29px), #e6e6e6 0); }
      .window { display: flex; flex-direction: column; min-height: 0; }
      .body { display: flex; flex: 1; min-height: 0; background: var(--chrome); }
      .taskbar { grid-column: 1 / 3; background: linear-gradient(90deg, #3a2018 0 8px, #1d242c 8px 400px, #262626 700px); border-top: 1px solid #4a4a4a; display: flex; align-items: flex-end; gap: 92px; padding-left: 685px; }
      .taskbar i { width: 40px; height: 4px; border-radius: 4px 4px 0 0; background: #3a3a3c; }
      .taskbar i + i { background: #7d4048; }
    `;
  }

  getTemplate() {
    return `
      <div class="edge"></div>
      <div class="window">
        <title-bar></title-bar>
        <ribbon-bar></ribbon-bar>
        <div class="body">
          <nav-tree></nav-tree>
          <work-area></work-area>
        </div>
      </div>
      <div class="taskbar"><i></i><i></i></div>
    `;
  }
}

customElements.define("ui-icon", UiIcon);
customElements.define("title-bar", TitleBar);
customElements.define("check-option", CheckOption);
customElements.define("ribbon-group", RibbonGroup);
customElements.define("ribbon-button", RibbonButton);
customElements.define("ribbon-bar", RibbonBar);
customElements.define("tree-item", TreeItem);
customElements.define("nav-tree", NavTree);
customElements.define("mdi-tab", MdiTab);
customElements.define("group-box", GroupBox);
customElements.define("pick-list", PickList);
customElements.define("labeled-field", LabeledField);
customElements.define("shackle-form", ShackleForm);
customElements.define("shackle-drawing", ShackleDrawing);
customElements.define("result-log", ResultLog);
customElements.define("status-bar", StatusBar);
customElements.define("work-area", WorkArea);
customElements.define("app-window", AppWindow);
</script>
</body>
</html>
